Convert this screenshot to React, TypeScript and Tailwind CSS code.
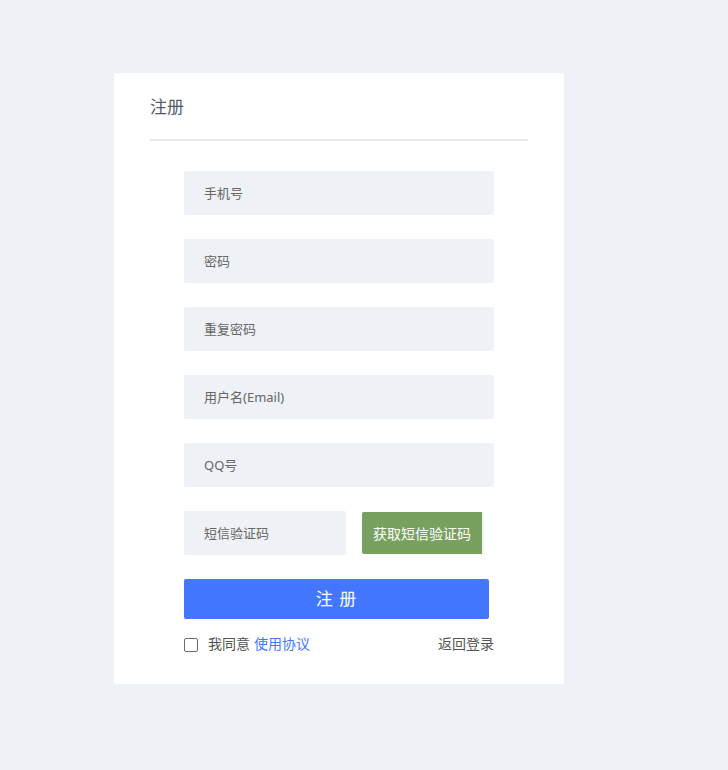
export default function App() {
  const fields = ["手机号", "密码", "重复密码", "用户名(Email)", "QQ号"];

  return (
    <div
      className="min-h-screen w-full bg-[#eef1f5] pt-[73px] pl-[114px]"
      style={{ fontFamily: '"Noto Sans", "Noto Sans CJK SC", sans-serif' }}
    >
      <div className="w-[450px] rounded-[2px] bg-white px-[36px] pt-[22px] pb-[29px]">
        <h2 className="text-[17px] leading-[24px] text-[#555b66]">注册</h2>
        <div className="mt-[20px] h-[2px] w-full bg-[#e6e8eb]"></div>

        <div className="ml-[34px] mt-[30px] flex w-[310px] flex-col gap-[24px]">
          {fields.map((f) => (
            <input
              key={f}
              placeholder={f}
              className="h-[44px] w-full rounded-[2px] bg-[#eef1f5] px-[20px] text-[13px] text-[#555] outline-none placeholder:text-[#666]"
            />
          ))}

          <div className="flex items-center">
            <input
              placeholder="短信验证码"
              className="h-[44px] w-[162px] rounded-[2px] bg-[#eef1f5] px-[20px] text-[13px] text-[#555] outline-none placeholder:text-[#666]"
            />
            <button className="ml-[16px] h-[42px] w-[122px] rounded-[2px] border-r-2 border-[#eef1f5] bg-[#78a05e] text-[14px] text-white">
              获取短信验证码
            </button>
          </div>

          <button className="h-[40px] w-[305px] rounded-[2px] bg-[#4477ff] text-[17px] tracking-[1px] text-white">
            注 册
          </button>
        </div>

        <div className="ml-[34px] mt-[16px] flex h-[20px] w-[310px] items-center justify-between text-[14px]">
          <label className="flex items-center">
            <span className="h-[14px] w-[14px] rounded-[2px] border border-[#666c75] bg-white"></span>
            <span className="ml-[10px] -translate-y-[2px] text-[#555]">我同意</span>
            <span className="ml-[4px] -translate-y-[2px] text-[#4477ff]">使用协议</span>
          </label>
          <span className="-translate-y-[2px] text-[#555]">返回登录</span>
        </div>
      </div>
    </div>
  );
}
